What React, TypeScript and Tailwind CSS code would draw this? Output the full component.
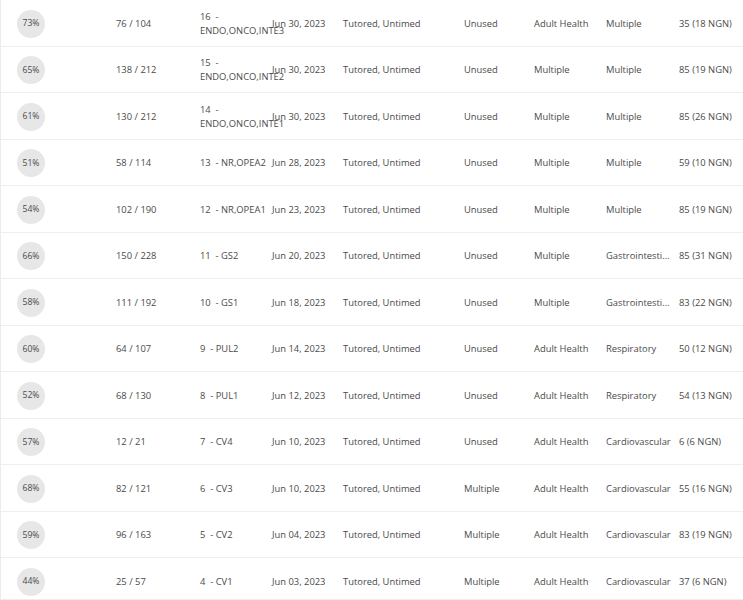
const rows = [
  { pct: "73%", score: "76 / 104", name: "16  - ENDO,ONCO,INTE3", date: "Jun 30, 2023", mode: "Tutored, Untimed", pool: "Unused", subject: "Adult Health", system: "Multiple", qs: "35 (18 NGN)" },
  { pct: "65%", score: "138 / 212", name: "15  - ENDO,ONCO,INTE2", date: "Jun 30, 2023", mode: "Tutored, Untimed", pool: "Unused", subject: "Multiple", system: "Multiple", qs: "85 (19 NGN)" },
  { pct: "61%", score: "130 / 212", name: "14  - ENDO,ONCO,INTE1", date: "Jun 30, 2023", mode: "Tutored, Untimed", pool: "Unused", subject: "Multiple", system: "Multiple", qs: "85 (26 NGN)" },
  { pct: "51%", score: "58 / 114", name: "13  - NR,OPEA2", date: "Jun 28, 2023", mode: "Tutored, Untimed", pool: "Unused", subject: "Multiple", system: "Multiple", qs: "59 (10 NGN)" },
  { pct: "54%", score: "102 / 190", name: "12  - NR,OPEA1", date: "Jun 23, 2023", mode: "Tutored, Untimed", pool: "Unused", subject: "Multiple", system: "Multiple", qs: "85 (19 NGN)" },
  { pct: "66%", score: "150 / 228", name: "11  - GS2", date: "Jun 20, 2023", mode: "Tutored, Untimed", pool: "Unused", subject: "Multiple", system: "Gastrointestinal", qs: "85 (31 NGN)" },
  { pct: "58%", score: "111 / 192", name: "10  - GS1", date: "Jun 18, 2023", mode: "Tutored, Untimed", pool: "Unused", subject: "Multiple", system: "Gastrointestinal", qs: "83 (22 NGN)" },
  { pct: "60%", score: "64 / 107", name: "9  - PUL2", date: "Jun 14, 2023", mode: "Tutored, Untimed", pool: "Unused", subject: "Adult Health", system: "Respiratory", qs: "50 (12 NGN)" },
  { pct: "52%", score: "68 / 130", name: "8  - PUL1", date: "Jun 12, 2023", mode: "Tutored, Untimed", pool: "Unused", subject: "Adult Health", system: "Respiratory", qs: "54 (13 NGN)" },
  { pct: "57%", score: "12 / 21", name: "7  - CV4", date: "Jun 10, 2023", mode: "Tutored, Untimed", pool: "Unused", subject: "Adult Health", system: "Cardiovascular", qs: "6 (6 NGN)" },
  { pct: "68%", score: "82 / 121", name: "6  - CV3", date: "Jun 10, 2023", mode: "Tutored, Untimed", pool: "Multiple", subject: "Adult Health", system: "Cardiovascular", qs: "55 (16 NGN)" },
  { pct: "59%", score: "96 / 163", name: "5  - CV2", date: "Jun 04, 2023", mode: "Tutored, Untimed", pool: "Multiple", subject: "Adult Health", system: "Cardiovascular", qs: "83 (19 NGN)" },
  { pct: "44%", score: "25 / 57", name: "4  - CV1", date: "Jun 03, 2023", mode: "Tutored, Untimed", pool: "Multiple", subject: "Adult Health", system: "Cardiovascular", qs: "37 (6 NGN)" },
];

const App = () => {
  return (
    <div
      className="h-[600px] overflow-hidden border-l border-b border-[#ececec] bg-white text-[9.4px] text-[#4a4a4a]"
      style={{ fontFamily: '"Open Sans", "Liberation Sans", sans-serif' }}
    >
      {rows.map((r) => (
        <div
          key={r.name}
          className="grid h-[46.5px] grid-cols-[115px_84px_72px_71px_121px_70px_72px_73px_64px] items-center border-b border-[#efefef] pt-[2px]"
        >
          <div className="pl-4">
            <div className="flex h-7 w-7 items-center justify-center rounded-full bg-[#e7e7e7] text-[8.6px]">
              {r.pct}
            </div>
          </div>
          <div>{r.score}</div>
          <div className="whitespace-pre-wrap leading-[14px]">{r.name}</div>
          <div>{r.date}</div>
          <div>{r.mode}</div>
          <div>{r.pool}</div>
          <div>{r.subject}</div>
          <div className="truncate pr-[7px]">{r.system}</div>
          <div className="whitespace-nowrap">{r.qs}</div>
        </div>
      ))}
    </div>
  );
};

export default App;
